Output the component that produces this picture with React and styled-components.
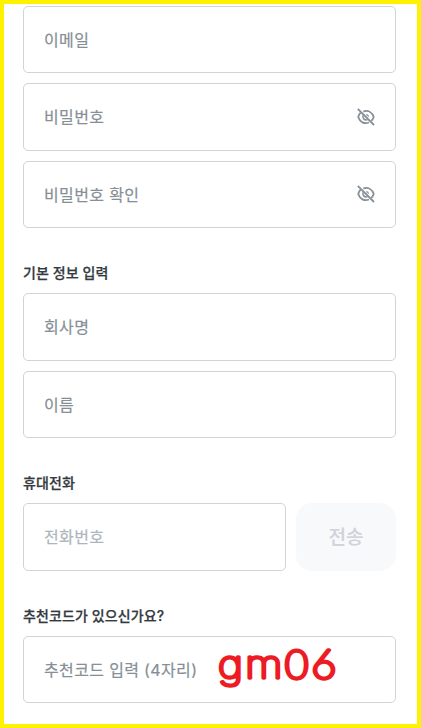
import React from 'react';
import styled, {createGlobalStyle} from 'styled-components';

const GlobalStyle = createGlobalStyle`
  * {
    box-sizing: border-box;
  }

  body {
    margin: 0;
    background: #fff;
    font-family: Inter, 'Noto Sans CJK KR', sans-serif;
  }
`;

const Page = styled.main`
  width: 421px;
  height: 728px;
  padding: 2px 21px 0 19px;
  border: 4px solid #fff200;
  overflow: hidden;
  background: #fff;
`;

const Section = styled.section`
  display: flex;
  flex-direction: column;
  gap: 10px;
  margin-bottom: ${({$gap}) => $gap || 0}px;
`;

const Label = styled.h2`
  height: 20px;
  margin: 0;
  color: #343a40;
  font-size: 14px;
  font-weight: 500;
  line-height: 20px;
  letter-spacing: 0.1px;
  white-space: nowrap;
  -webkit-text-stroke: 0.25px #343a40;
`;

const Field = styled.div`
  position: relative;
  display: flex;
  flex: 1 0 auto;
  align-items: center;
  justify-content: space-between;
  height: ${({$tall}) => ($tall ? 68 : 67)}px;
  padding: 0 20px;
  border: 1px solid #ced4da;
  border-radius: 5px;
`;

const Placeholder = styled.span`
  color: ${({$light}) => ($light ? '#adb5bd' : '#868e96')};
  font-size: 16px;
  line-height: 24px;
  letter-spacing: 0.35px;
  white-space: nowrap;
  -webkit-text-stroke: 0.2px currentColor;
`;

const Row = styled.div`
  display: flex;
  gap: 10px;
`;

const SendButton = styled.button`
  width: 100px;
  height: 68px;
  padding: 0 0 3px;
  border: 0;
  border-radius: 16px;
  background: #f8f9fa;
  color: #ced4da;
  font-family: inherit;
  font-size: 19px;
  font-weight: 500;
  -webkit-text-stroke: 0.15px currentColor;
`;

const Code = styled.svg`
  position: absolute;
  top: 5px;
  left: 190px;
  width: 128px;
  height: 54px;
  overflow: visible;

  text {
    fill: #ed1c24;
    stroke: #ed1c24;
    stroke-width: 3.3;
    stroke-linejoin: round;
    font-family: Inter, sans-serif;
    font-size: 37px;
    font-weight: 100;
    font-feature-settings: 'cv03';
  }

  .digits {
    font-size: 39px;
  }
`;

const EyeIcon = styled.svg`
  flex: none;
  margin-bottom: ${({$raised}) => ($raised ? 1 : 0)}px;
`;

const EyeOff = ({raised}) => (
  <EyeIcon
    $raised={raised}
    width="18"
    height="18"
    viewBox="0 0 18 18"
    fill="none"
    stroke="#868e96"
    strokeWidth="1.8"
  >
    <path d="M0.8 0.8 L17 17" />
    <path d="M6.3 3.4 C11.4 1.8 15.2 4.5 16.7 9 C16.2 10.5 15.4 11.8 14.3 12.8" />
    <path d="M3.6 4.6 C2.4 5.8 1.7 7.2 1.2 9 C3 14.2 7.3 16.2 12 14.5" />
    <path d="M6.2 7.2 C4.9 9.9 7.4 12.8 10.6 11.6" strokeWidth="1.5" />
    <path d="M9.2 6.6 C10.6 6.8 11.4 7.6 11.5 8.8" strokeWidth="1.1" />
  </EyeIcon>
);

const App = () => (
  <>
    <GlobalStyle />
    <Page>
      <Section $gap={35}>
        <Field>
          <Placeholder>이메일</Placeholder>
        </Field>
        <Field $tall>
          <Placeholder>비밀번호</Placeholder>
          <EyeOff />
        </Field>
        <Field>
          <Placeholder>비밀번호 확인</Placeholder>
          <EyeOff raised />
        </Field>
      </Section>

      <Section $gap={35}>
        <Label>기본 정보 입력</Label>
        <Field $tall>
          <Placeholder>회사명</Placeholder>
        </Field>
        <Field>
          <Placeholder>이름</Placeholder>
        </Field>
      </Section>

      <Section $gap={35}>
        <Label>휴대전화</Label>
        <Row>
          <Field $tall>
            <Placeholder $light>전화번호</Placeholder>
          </Field>
          <SendButton type="button">전송</SendButton>
        </Row>
      </Section>

      <Section>
        <Label>추천코드가 있으신가요?</Label>
        <Field>
          <Placeholder>추천코드 입력 (4자리)</Placeholder>
          <Code>
            <text transform="scale(1.16 1)" x="3.4 27" y="36.5">
              gm
              <tspan className="digits" x="59.8 83.8">06</tspan>
            </text>
          </Code>
        </Field>
      </Section>
    </Page>
  </>
);

export default App;
